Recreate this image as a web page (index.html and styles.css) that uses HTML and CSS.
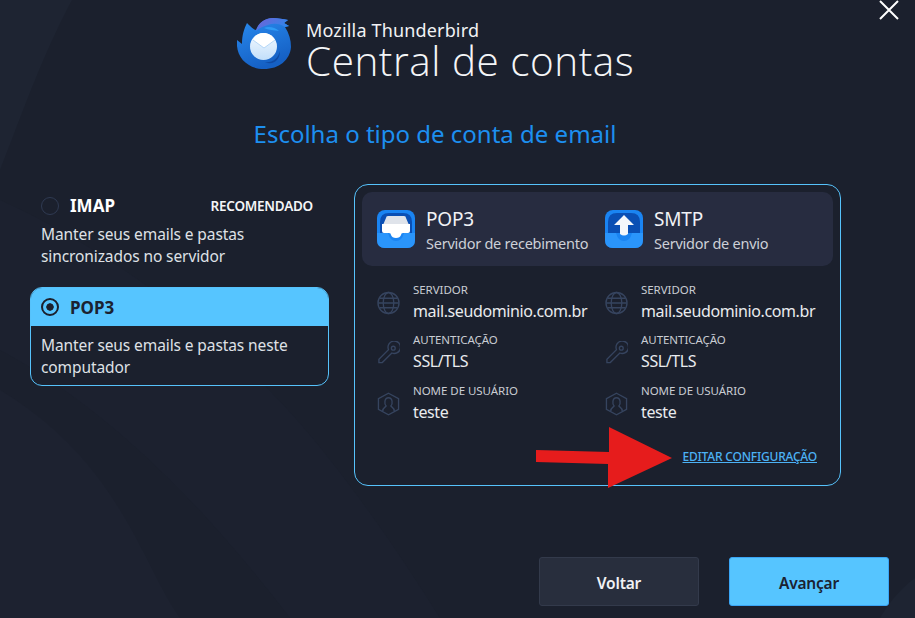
FILE: index.html
```html
<!DOCTYPE html>
<html lang="pt-BR">
<head>
<meta charset="utf-8">
<title>Central de contas</title>
<link rel="stylesheet" href="styles.css">
</head>
<body>
<div class="app">
  <svg class="bg-waves" viewBox="0 0 915 618" aria-hidden="true">
    <path class="wave-a" d="M0 0H72C40 60 20 120 0 170Z"/>
    <path class="wave-c" d="M0 200C90 240 230 330 330 460C370 510 410 570 440 618H290C230 540 130 420 0 350Z"/>
    <path class="wave-b" d="M0 390C50 420 90 460 120 510C145 550 160 590 180 618H0Z"/>
    <path class="wave-a" d="M880 618C890 600 905 585 915 578V618Z"/>
  </svg>
  <button class="close" aria-label="Fechar">
    <svg viewBox="0 0 22 22"><path d="M2 1L20 19M20 1L2 19"/></svg>
  </button>

  <header class="brand">
    <svg class="logo" viewBox="0 0 54 54" aria-hidden="true">
      <defs>
        <linearGradient id="lb" x1="0" y1="0" x2="0.4" y2="1"><stop offset="0" stop-color="#2a8cf0"/><stop offset="1" stop-color="#1560c4"/></linearGradient>
        <linearGradient id="lh" x1="0" y1="0" x2="1" y2="0.5"><stop offset="0" stop-color="#7560d6"/><stop offset="1" stop-color="#2f86ea"/></linearGradient>
        <linearGradient id="le" x1="0" y1="0" x2="0" y2="1"><stop offset="0" stop-color="#f4f9ff"/><stop offset="1" stop-color="#c2dffa"/></linearGradient>
      </defs>
      <path fill="url(#lb)" d="M19 13C22 5 29 1 36 1C41 1 46 2 51 3L47 6L52 9L48 10C52 16 54 23 54 30C53 43 42 52 27 52C12 52 1 42 0 29C0 27 0 25 0 23L5 27C5 18 7 12 10 6C14 10 17 13 19 13Z"/>
      <path fill="url(#lh)" d="M19 14C21 6 28 1 36 1C41 1 46 2 51 3L47 6L52 9L48 10C42 6 36 6 31 8C27 9 22 11 19 14Z"/>
      <path fill="#2e9bf5" d="M27 11C31 9 38 10 42 14C37 13 31 13 27 11Z"/>
      <circle fill="url(#le)" cx="26.500" cy="29.500" r="13.500"/>
      <path fill="#fff" d="M16 23C18 18 22 16 26.500 16C31 16 35 18 38 23L27 31Z"/>
      <path fill="none" stroke="#a7cff5" stroke-width=".8" d="M16 23L27 31L38 23"/>
      <path fill="#0f4aa3" d="M28 45C35 46 41 42 43 34C43 43 36 49 28 45Z"/>
    </svg>
    <div class="brand-text">
      <div class="brand-name">Mozilla Thunderbird</div>
      <h1 class="brand-title">Central de contas</h1>
    </div>
  </header>

  <h2 class="heading">Escolha o tipo de conta de email</h2>

  <main class="content">
    <section class="options">
      <div class="option option-first">
        <div class="option-head">
          <span class="radio"></span>
          <span class="option-name">IMAP</span>
          <span class="option-tag">RECOMENDADO</span>
        </div>
        <p class="option-desc">Manter seus emails e pastas sincronizados no servidor</p>
      </div>
      <div class="option option-active">
        <div class="option-head">
          <span class="radio radio-on"></span>
          <span class="option-name">POP3</span>
        </div>
        <p class="option-desc">Manter seus emails e pastas neste computador</p>
      </div>
    </section>

    <section class="panel">
      <div class="servers">
        <div class="server">
          <svg class="server-icon" viewBox="0 0 38 38" aria-hidden="true">
            <rect width="38" height="38" rx="8" fill="#1a84f2"/>
            <path d="M3 12Q3 3 12 3H26Q35 3 35 12V23H3Z" fill="#0a4fb4"/>
            <path d="M9 8Q9 6 11 6H27Q29 6 29 8L32 15V19H6V15Z" fill="#dfe3ea"/>
            <path d="M5 14H33V21Q33 23 31 23H26Q24 23 24 25Q23 28 19 28Q15 28 14 25Q14 23 12 23H7Q5 23 5 21Z" fill="#fff"/>
            <path d="M0 23H11Q13 31 19 31Q25 31 27 23H38V30Q38 38 30 38H8Q0 38 0 30Z" fill="#2a95fb"/>
          </svg>
          <div class="server-text">
            <div class="server-name">POP3</div>
            <div class="server-sub">Servidor de recebimento</div>
          </div>
        </div>
        <div class="server">
          <svg class="server-icon" viewBox="0 0 38 38" aria-hidden="true">
            <rect width="38" height="38" rx="8" fill="#1a84f2"/>
            <path d="M3 12Q3 3 12 3H26Q35 3 35 12V23H3Z" fill="#0a4fb4"/>
            <path d="M0 23H11Q13 31 19 31Q25 31 27 23H38V30Q38 38 30 38H8Q0 38 0 30Z" fill="#2a95fb"/>
            <path d="M19 5L29 15H23V24Q19 27 15 24V15H9Z" fill="#f4f7fb"/>
          </svg>
          <div class="server-text">
            <div class="server-name">SMTP</div>
            <div class="server-sub">Servidor de envio</div>
          </div>
        </div>
      </div>

      <div class="details">
        <dl class="detail-col">
          <div class="detail">
            <svg class="detail-icon" viewBox="0 0 24 24"><circle cx="12" cy="12" r="11"/><ellipse cx="12" cy="12" rx="5.500" ry="11"/><path d="M2.500 7H21.500M2.500 17H21.500M1 12H23"/></svg>
            <div><dt>SERVIDOR</dt><dd>mail.seudominio.com.br</dd></div>
          </div>
          <div class="detail">
            <svg class="detail-icon" viewBox="0 0 24 24"><path d="M2 22V18.500L12 8.500A6.500 6.500 0 1 1 15.500 12L5.500 22Z"/><circle cx="17" cy="7" r="2"/></svg>
            <div><dt>AUTENTICAÇÃO</dt><dd>SSL/TLS</dd></div>
          </div>
          <div class="detail">
            <svg class="detail-icon" viewBox="0 0 24 24"><path d="M12 .8L22.500 6.500V17.500L12 23.200L1.500 17.500V6.500Z"/><path d="M6 19.500C6 15.500 9 15.500 9.500 14C7.500 12 7.500 5.500 12 5.500C16.500 5.500 16.500 12 14.500 14C15 15.500 18 15.500 18 19.500"/></svg>
            <div><dt>NOME DE USUÁRIO</dt><dd>teste</dd></div>
          </div>
        </dl>
        <dl class="detail-col">
          <div class="detail">
            <svg class="detail-icon" viewBox="0 0 24 24"><circle cx="12" cy="12" r="11"/><ellipse cx="12" cy="12" rx="5.500" ry="11"/><path d="M2.500 7H21.500M2.500 17H21.500M1 12H23"/></svg>
            <div><dt>SERVIDOR</dt><dd>mail.seudominio.com.br</dd></div>
          </div>
          <div class="detail">
            <svg class="detail-icon" viewBox="0 0 24 24"><path d="M2 22V18.500L12 8.500A6.500 6.500 0 1 1 15.500 12L5.500 22Z"/><circle cx="17" cy="7" r="2"/></svg>
            <div><dt>AUTENTICAÇÃO</dt><dd>SSL/TLS</dd></div>
          </div>
          <div class="detail">
            <svg class="detail-icon" viewBox="0 0 24 24"><path d="M12 .8L22.500 6.500V17.500L12 23.200L1.500 17.500V6.500Z"/><path d="M6 19.500C6 15.500 9 15.500 9.500 14C7.500 12 7.500 5.500 12 5.500C16.500 5.500 16.500 12 14.500 14C15 15.500 18 15.500 18 19.500"/></svg>
            <div><dt>NOME DE USUÁRIO</dt><dd>teste</dd></div>
          </div>
        </dl>
      </div>
      <div class="panel-foot"><a class="edit-link" href="#">EDITAR CONFIGURAÇÃO</a></div>
    </section>
  </main>

  <footer class="actions">
    <button class="btn btn-back">Voltar</button>
    <button class="btn btn-next">Avançar</button>
  </footer>

  <svg class="red-arrow" viewBox="0 0 136 62" aria-hidden="true">
    <path d="M0 23L73 25V0L136 31L72 61V37L0 35Z"/>
  </svg>
</div>
</body>
</html>
```

FILE: styles.css
```css
* { box-sizing: border-box; }
html, body { margin: 0; padding: 0; }
body { background: #1b202d; font-family: "Noto Sans", "Open Sans", sans-serif; color: #e6e8ec; }

.app {
  position: relative;
  width: 915px;
  height: 618px;
  overflow: hidden;
  background: #1b202d;
  display: flex;
  flex-direction: column;
}
.bg-waves { position: absolute; inset: 0; width: 915px; height: 618px; }
.wave-a { fill: #1e2432; }
.wave-b { fill: #1d2230; }
.wave-c { fill: #1c212f; }

.close {
  position: absolute;
  top: 0;
  right: 15px;
  width: 22px;
  height: 22px;
  padding: 0;
  border: 0;
  background: none;
}
.close svg { display: block; width: 22px; height: 22px; fill: none; stroke: #fff; stroke-width: 2; }

.brand {
  position: relative;
  display: flex;
  align-items: flex-start;
  gap: 15px;
  padding: 17px 0 0 237px;
  height: 120px;
}
.logo { display: block; width: 54px; height: 54px; flex: none; }
.brand-text { margin-top: 1px; }
.brand-name { font-size: 18px; line-height: 24px; letter-spacing: .16px; color: #f1f2f4; }
.brand-title {
  margin: 0;
  font-family: "Open Sans", sans-serif;
  font-weight: 300;
  font-size: 40.500px;
  line-height: 38px;
  letter-spacing: .52px;
  color: #f4f5f7;
}
.heading {
  position: relative;
  margin: 0;
  width: 870px;
  height: 64px;
  text-align: center;
  font-weight: 400;
  font-size: 24px;
  line-height: 28px;
  color: #1d8ff0;
}

.content {
  position: relative;
  display: flex;
  align-items: flex-start;
  gap: 25px;
  padding-left: 30px;
  height: 302px;
}
.options { width: 299px; flex: none; display: flex; flex-direction: column; gap: 20px; padding-top: 1px; }
.option-head {
  display: flex;
  align-items: center;
  gap: 11px;
  height: 39px;
  padding: 0 16px 0 11px;
}
.option-first .option-head { padding-top: 2px; }
.option-first .option-desc { margin-top: -1px; }
.radio {
  width: 18px;
  height: 18px;
  border-radius: 50%;
  border: 1px solid #2f3a52;
  flex: none;
}
.radio-on {
  border: 2px solid #1b202d;
  background: radial-gradient(circle, #1b202d 0 3.400px, transparent 4px);
}
.option-name { font-weight: 700; font-size: 17px; color: #fff; letter-spacing: 0; }
.option-tag { margin-left: auto; font-weight: 600; font-size: 13.500px; letter-spacing: -.25px; color: #f4f5f7; }
.option-desc {
  margin: 0;
  padding: 0 11px;
  font-size: 15.500px;
  line-height: 22px;
  letter-spacing: -.1px;
  color: #dfe1e6;
}
.option-active {
  border: 1px solid #56c2fb;
  border-radius: 12px;
  overflow: hidden;
  background: #1b202d;
}
.option-active .option-head { background: #56c5ff; height: 38px; padding-left: 10px; }
.option-active .option-name { color: #1b2231; }
.option-active .option-desc { padding: 8px 10px 7px; }

.panel {
  width: 487px;
  height: 302px;
  border: 1px solid #56c2fb;
  border-radius: 14px;
  padding: 7px;
  flex: none;
  background: #1b202d;
}
.servers {
  display: grid;
  grid-template-columns: 228px 1fr;
  align-items: center;
  height: 74px;
  padding-left: 15px;
  background: #272c40;
  border-radius: 10px;
}
.server { display: flex; align-items: center; gap: 11px; }
.server-icon { display: block; width: 38px; height: 38px; flex: none; }
.server-text { padding-top: 2px; }
.server-name { font-size: 19px; line-height: 26px; letter-spacing: -.2px; color: #f1f2f5; }
.server-sub { font-size: 14.500px; line-height: 23px; letter-spacing: -.25px; color: #cdd0d7; }

.details {
  display: grid;
  grid-template-columns: 228px 1fr;
  padding: 14px 0 0 15px;
}
.detail-col { margin: 0; display: flex; flex-direction: column; gap: 5.500px; }
.detail { display: flex; align-items: center; gap: 13px; height: 45px; }
.detail-icon { display: block; width: 23px; height: 24px; flex: none; fill: none; stroke: #36445f; stroke-width: 1.400; }
dt { font-size: 11.500px; line-height: 16px; letter-spacing: -.05px; color: #c9ccd3; }
dd { margin: 0; font-size: 16px; line-height: 26px; letter-spacing: -.39px; color: #e9ebee; }

.panel-foot { display: flex; justify-content: flex-end; padding: 22px 16px 0 0; }
.edit-link { font-size: 12px; line-height: 18px; letter-spacing: -.2px; color: #4cb2f5; text-decoration: underline; font-weight: 500; }

.actions {
  position: relative;
  display: flex;
  justify-content: flex-end;
  gap: 30px;
  padding-right: 26px;
  margin-top: 71px;
}
.btn {
  width: 160px;
  height: 49px;
  padding: 2px 0 0;
  border-radius: 3px;
  font-family: inherit;
  font-size: 15.500px;
  font-weight: 600;
  letter-spacing: -.2px;
}
.btn-back { background: #282e3d; border: 1px solid #333a4b; color: #f0f1f4; }
.btn-next { background: #56c5ff; border: 1px solid #3aa5f5; color: #1b2231; }

.red-arrow {
  position: absolute;
  left: 536px;
  top: 427px;
  width: 136px;
  height: 62px;
}
.red-arrow path { fill: #e61c1c; }
```
